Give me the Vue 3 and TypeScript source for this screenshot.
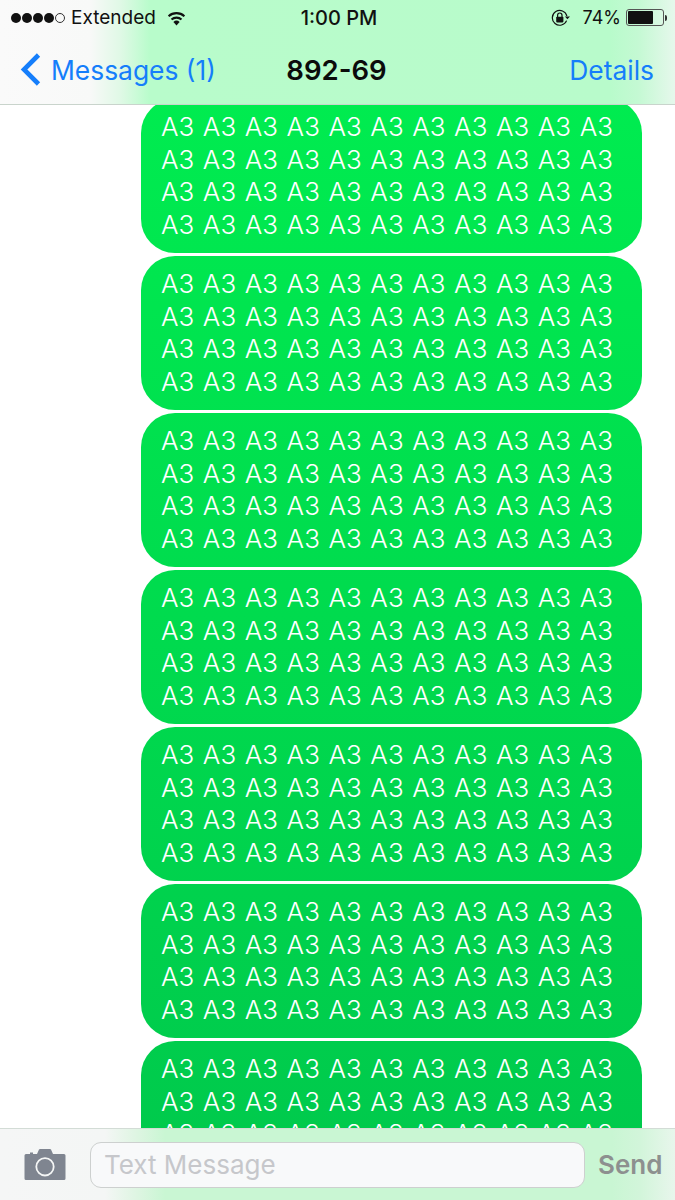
<script setup lang="ts">
// Seven identical bubbles, the last one runs under the composer
const bubbles = [1, 2, 3, 4, 5, 6, 7];
const bubbleText = Array(44).fill('A3').join(' ');
const dots = [true, true, true, true, false];
</script>

<template>
  <div class="phone">
    <header class="top-bar">
      <div class="status-bar">
        <div class="status-left">
          <span class="signal">
            <i v-for="(on, i) in dots" :key="i" class="dot" :class="{ empty: !on }"></i>
          </span>
          <span class="carrier">Extended</span>
          <svg class="wifi" width="21" height="16" viewBox="0 0 21 16">
            <path d="M10.5 15.5 L7.4 11.9 A4.6 4.6 0 0 1 13.6 11.9 Z" fill="#111" />
            <path d="M5.5 9.6 A7.4 7.4 0 0 1 15.5 9.6" fill="none" stroke="#111" stroke-width="2.1" />
            <path d="M2.6 6.2 A11.8 11.8 0 0 1 18.4 6.2" fill="none" stroke="#111" stroke-width="2.1" />
          </svg>
        </div>
        <div class="clock">1:00 PM</div>
        <div class="status-right">
          <svg class="rotation-lock" width="20" height="18" viewBox="0 0 20 18">
            <path d="M15.6 11.6 A7.4 7.4 0 1 1 15.9 7" fill="none" stroke="#111" stroke-width="1.2" />
            <path d="M13.9 7.4 L19 7.4 L16.4 10.2 Z" fill="#111" />
            <rect x="5.2" y="7.8" width="7.2" height="5.6" rx="0.8" fill="#111" />
            <path d="M6.6 8 V6.2 A2.2 2.2 0 0 1 11 6.2 V8" fill="none" stroke="#111" stroke-width="1.2" />
          </svg>
          <span class="percent">74%</span>
          <span class="battery"><span class="battery-fill"></span></span>
          <span class="battery-tip"></span>
        </div>
      </div>
      <nav class="nav-bar">
        <div class="nav-back">
          <svg width="23" height="35" viewBox="0 0 23 35">
            <path d="M19.5 3 L5 17.5 L19.5 32" fill="none" stroke="#157efb" stroke-width="4.6" />
          </svg>
          <span>Messages (1)</span>
        </div>
        <div class="nav-title">892-69</div>
        <div class="nav-details">Details</div>
      </nav>
    </header>

    <main class="thread">
      <div class="thread-list">
        <div v-for="b in bubbles" :key="b" class="bubble">{{ bubbleText }}</div>
      </div>
    </main>

    <footer class="composer">
      <svg class="camera" width="42" height="33" viewBox="0 0 42 33">
        <path
          fill="#7f8590"
          fill-rule="evenodd"
          d="M2 6 H6 V4.6 H9 V6 H13 L15 1.6 Q15.4 1 16 1 H26 Q26.7 1 27 1.6 L29 6 H40 Q41.5 6 41.5 7.5 V30.5 Q41.5 32 40 32 H2 Q0.5 32 0.5 30.5 V7.5 Q0.5 6 2 6 Z M21 9.2 A9.6 9.6 0 1 0 21 28.4 A9.6 9.6 0 1 0 21 9.2 Z M21 11 A7.8 7.8 0 1 1 21 26.6 A7.8 7.8 0 1 1 21 11 Z"
        />
      </svg>
      <div class="text-input">Text Message</div>
      <div class="send">Send</div>
    </footer>
  </div>
</template>

<style scoped>
.phone {
  width: 675px;
  height: 1200px;
  display: flex;
  flex-direction: column;
  overflow: hidden;
  background: #fff;
  font-family: Inter, "Liberation Sans", sans-serif;
  color: #111;
}

.top-bar {
  height: 105px;
  box-sizing: border-box;
  flex-shrink: 0;
  border-bottom: 1px solid #c9d4cc;
  background: linear-gradient(90deg, #fafafa 0, #f8f9f8 90px, #e0f9e6 120px, #b8fccb 150px, #b8fbcb 610px, #c4f9d3 638px, #e6f8ec 675px);
}

.status-bar {
  height: 35px;
  display: grid;
  grid-template-columns: 1fr auto 1fr;
  align-items: center;
  padding: 0 8px 0 11px;
  font-size: 19px;
}

.status-left,
.status-right {
  display: flex;
  align-items: center;
}

.status-right {
  justify-content: flex-end;
}

.signal {
  display: flex;
  gap: 1px;
}

.dot {
  width: 10px;
  height: 10px;
  border-radius: 50%;
  background: #111;
  box-sizing: border-box;
}

.dot.empty {
  background: transparent;
  border: 1px solid #333;
}

.carrier {
  margin-left: 6px;
}

.wifi {
  margin-left: 10px;
}

.clock {
  font-size: 20px;
  font-weight: 500;
}

.percent {
  margin-left: 12px;
  font-size: 18px;
}

.battery {
  margin-left: 5px;
  width: 38px;
  height: 17px;
  box-sizing: border-box;
  border: 1px solid #555;
  border-radius: 3px;
  padding: 1px;
  display: flex;
}

.battery-fill {
  width: 74%;
  background: #111;
  border-radius: 1px;
}

.battery-tip {
  width: 2px;
  height: 6px;
  margin-left: 1px;
  background: #333;
  border-radius: 0 2px 2px 0;
}

.nav-bar {
  height: 69px;
  display: grid;
  grid-template-columns: 1fr auto 1fr;
  align-items: center;
  padding: 0 21px 5px 19px;
  font-size: 26.4px;
  color: #157efb;
}

.nav-back {
  display: flex;
  align-items: center;
  gap: 9px;
}

.nav-title {
  color: #0b0b0b;
  font-size: 27.5px;
  font-weight: 600;
}

.nav-details {
  text-align: right;
}

.thread {
  flex: 1;
  min-height: 0;
  overflow: hidden;
}

.thread-list {
  margin-top: -6px;
  padding-left: 141px;
  display: flex;
  flex-direction: column;
  gap: 3px;
}

.bubble {
  width: 501px;
  height: 154px;
  flex-shrink: 0;
  box-sizing: border-box;
  padding: 12px 21px 12px 20px;
  border-radius: 34px;
  background: linear-gradient(180deg, #00ef50 0, #00c84c 1200px) fixed;
  color: #fff;
  font-size: 26px;
  font-weight: 300;
  line-height: 32.5px;
  word-spacing: 1.3px;
}

.composer {
  height: 72px;
  flex-shrink: 0;
  box-sizing: border-box;
  border-top: 1px solid #d3dcd6;
  display: flex;
  align-items: center;
  padding: 0 12px 0 24px;
  background: linear-gradient(90deg, #f5f6f6 0, #f4f6f5 105px, #dff5e3 135px, #c9f6d3 165px, #c9f6d3 612px, #d2f5da 640px, #e8f6ec 675px);
}

.camera {
  flex-shrink: 0;
}

.text-input {
  margin-left: 24px;
  width: 495px;
  height: 46px;
  box-sizing: border-box;
  border: 1.5px solid #cdd0cf;
  border-radius: 11px;
  background: #f8f9fa;
  padding-left: 13px;
  display: flex;
  align-items: center;
  font-size: 26px;
  color: #c6c7cb;
}

.send {
  margin-left: 13px;
  font-size: 26px;
  font-weight: 600;
  color: #8d908f;
}
</style>
